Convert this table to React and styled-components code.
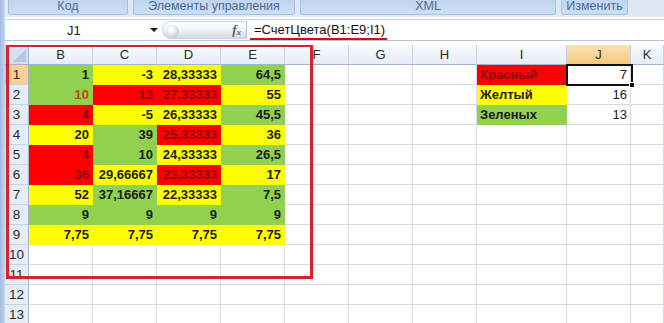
import React from 'react';
import styled, { createGlobalStyle, css } from 'styled-components';

const GlobalStyle = createGlobalStyle`
  html, body {
    margin: 0;
    padding: 0;
    background: #ffffff;
    overflow: hidden;
  }
  * {
    box-sizing: border-box;
  }
`;

const FILLS = {
  g: '#92d050',
  y: '#ffff00',
  r: '#ff0000',
};

// value, fill, optional text colour
const data = [
  [['1', 'g'], ['-3', 'y'], ['28,33333', 'y'], ['64,5', 'g']],
  [['10', 'g', '#c2461a'], ['13', 'r'], ['27,33333', 'r'], ['55', 'y']],
  [['4', 'r'], ['-5', 'y'], ['26,33333', 'y'], ['45,5', 'g']],
  [['20', 'y'], ['39', 'g'], ['25,33333', 'r'], ['36', 'y']],
  [['4', 'r'], ['10', 'g'], ['24,33333', 'y'], ['26,5', 'g']],
  [['36', 'r'], ['29,66667', 'y'], ['23,33333', 'r'], ['17', 'y']],
  [['52', 'y'], ['37,16667', 'g'], ['22,33333', 'y'], ['7,5', 'g']],
  [['9', 'g'], ['9', 'g'], ['9', 'g'], ['9', 'g']],
  [['7,75', 'y'], ['7,75', 'y'], ['7,75', 'y'], ['7,75', 'y']],
];

const legend = [
  ['Красный', 'r', '7'],
  ['Желтый', 'y', '16'],
  ['Зеленых', 'g', '13'],
];

const columns = ['B', 'C', 'D', 'E', 'F', 'G', 'H', 'I', 'J', 'K'];

const App = () => {
  const rows = [];
  for (let r = 1; r <= 13; r++) {
    const values = data[r - 1] || [];
    const leg = legend[r - 1];
    rows.push(
      <React.Fragment key={r}>
        <RowHead active={r === 1}>{r}</RowHead>
        {[0, 1, 2, 3].map((c) => {
          const v = values[c];
          return v ? (
            <Cell key={c} fill={FILLS[v[1]]} ink={v[2] || (v[1] === 'r' ? '#8a0a0a' : '#1b1b1b')} bold>
              {v[0]}
            </Cell>
          ) : (
            <Cell key={c} />
          );
        })}
        <Cell />
        <Cell />
        <Cell />
        {leg ? (
          <Cell fill={FILLS[leg[1]]} ink={leg[1] === 'r' ? '#8a0a0a' : '#1b1b1b'} bold left>
            {leg[0]}
          </Cell>
        ) : (
          <Cell />
        )}
        <Cell ink='#1b1b1b'>{leg ? leg[2] : ''}</Cell>
        <Cell />
      </React.Fragment>
    );
  }

  return (
    <Window>
      <GlobalStyle />
      <Frame />
      <Main>
        <Ribbon>
          <RibbonTab width={120}>Код</RibbonTab>
          <RibbonTab width={162}>Элементы управления</RibbonTab>
          <RibbonTab width={256}>XML</RibbonTab>
          <RibbonTab width={67}>Изменить</RibbonTab>
        </Ribbon>

        <FormulaBar>
          <NameBox>
            <span>J1</span>
            <DropArrow />
          </NameBox>
          <Grip>
            <GripKnob />
            <Fx>
              f<sub>x</sub>
            </Fx>
          </Grip>
          <Formula>
            <Underlined>=СчетЦвета(B1:E9;I1)</Underlined>
          </Formula>
        </FormulaBar>

        <SheetWrap>
          <Sheet>
            <Corner />
            {columns.map((c) => (
              <ColHead key={c} active={c === 'J'}>
                {c}
              </ColHead>
            ))}
            {rows}
          </Sheet>
          <Highlight />
          <Selection>
            <Handle />
          </Selection>
        </SheetWrap>
      </Main>
    </Window>
  );
};

const Window = styled.div`
  display: flex;
  width: 664px;
  height: 323px;
  background: #ffffff;
  font-family: 'Liberation Sans', Arial, sans-serif;
`;

const Frame = styled.div`
  width: 5px;
  flex-shrink: 0;
  background: linear-gradient(to right, #9fbbe0, #c4d7ef);
`;

const Main = styled.div`
  flex: 1;
  display: flex;
  flex-direction: column;
  min-width: 0;
`;

const Ribbon = styled.div`
  display: flex;
  gap: 5px;
  height: 17px;
  padding: 0 0 0 3px;
  background: #dfe9f6;
`;

const RibbonTab = styled.div`
  width: ${(p) => p.width}px;
  height: 15px;
  display: flex;
  align-items: center;
  justify-content: center;
  font-size: 12.5px;
  color: #4d6b94;
  background: linear-gradient(to bottom, #c0d5ef, #cddff4);
  border: 1px solid #a9c1e0;
  border-top: none;
  border-radius: 0 0 3px 3px;
  line-height: 1;
  padding-bottom: 1px;
`;

const FormulaBar = styled.div`
  display: flex;
  align-items: stretch;
  height: 22px;
  margin-top: 2px;
  background: #ffffff;
  border-top: 1px solid #c3cfdf;
  border-bottom: 1px solid #b9c6d8;
`;

const NameBox = styled.div`
  width: 157px;
  display: flex;
  align-items: center;
  font-size: 13px;
  color: #1b1b1b;
  padding-left: 62px;

  > span {
    flex: 1;
  }
`;

const DropArrow = styled.div`
  width: 0;
  height: 0;
  margin-right: 4px;
  border-left: 4px solid transparent;
  border-right: 4px solid transparent;
  border-top: 4px solid #1b1b1b;
`;

const Grip = styled.div`
  position: relative;
  width: 85px;
  margin: 1px 0;
  display: flex;
  align-items: center;
  justify-content: flex-end;
  padding-right: 5px;
  border-radius: 10px 0 0 10px;
  border: 1px solid #c9d2de;
  border-right: 1px solid #b0bccc;
  background: linear-gradient(to bottom, #ffffff 0%, #f2f4f7 45%, #d4dbe4 100%);
`;

const GripKnob = styled.div`
  position: absolute;
  left: 3px;
  top: 3px;
  width: 13px;
  height: 13px;
  border-radius: 50%;
  background: radial-gradient(circle at 40% 35%, #ffffff 15%, #c9ced6 70%, #aeb5c0);
`;

const Fx = styled.span`
  font-family: 'Liberation Serif', 'Times New Roman', serif;
  font-style: italic;
  font-size: 13px;
  color: #5a5a5a;
  font-weight: bold;

  sub {
    font-size: 9px;
    vertical-align: -1px;
  }
`;

const Formula = styled.div`
  flex: 1;
  display: flex;
  align-items: center;
  padding-left: 3px;
  font-size: 13px;
  color: #111111;
`;

const Underlined = styled.span`
  padding-left: 4px;
  padding-right: 2px;
  line-height: 16px;
  border-bottom: 2px solid #d10f0f;
  margin-top: 2px;
`;

const SheetWrap = styled.div`
  position: relative;
  margin-top: 4px;
  flex: 1;
  overflow: hidden;
`;

const Sheet = styled.div`
  display: grid;
  grid-template-columns: 24px repeat(7, 64px) 90px 64px 1fr;
  grid-auto-rows: 20px;
`;

const headBase = css`
  display: flex;
  align-items: center;
  justify-content: center;
  font-size: 13px;
  color: #2a2a2a;
  border-right: 1px solid #c5d2e2;
  border-bottom: 1px solid #9fb4cf;
`;

const Corner = styled.div`
  position: relative;
  background: #d5e0ee;
  border-right: 1px solid #9fb4cf;
  border-bottom: 1px solid #9fb4cf;

  &::after {
    content: '';
    position: absolute;
    right: 2px;
    bottom: 2px;
    border-left: 13px solid transparent;
    border-bottom: 13px solid #b7c9e0;
  }
`;

const ColHead = styled.div`
  ${headBase};
  background: ${(p) =>
    p.active
      ? 'linear-gradient(to bottom, #fbe3b5, #f6c87c)'
      : 'linear-gradient(to bottom, #f7fafe, #e6edf7)'};
`;

const RowHead = styled.div`
  ${headBase};
  font-size: 13.5px;
  border-right: 1px solid #9fb4cf;
  border-bottom: 1px solid #c5d2e2;
  background: ${(p) => (p.active ? '#f9cf95' : '#e6edf7')};
`;

const Cell = styled.div`
  display: flex;
  align-items: center;
  justify-content: ${(p) => (p.left ? 'flex-start' : 'flex-end')};
  padding: 0 3px;
  font-size: 13px;
  font-weight: ${(p) => (p.bold ? 'bold' : 'normal')};
  color: ${(p) => p.ink || '#1b1b1b'};
  background: ${(p) => p.fill || '#ffffff'};
  border-right: 1px solid ${(p) => p.fill || '#d6dce5'};
  border-bottom: 1px solid ${(p) => p.fill || '#d6dce5'};
  white-space: nowrap;
  overflow: hidden;
`;

const Highlight = styled.div`
  position: absolute;
  left: 1px;
  top: -1px;
  width: 307px;
  height: 235px;
  border: 3px solid #d4232a;
  box-shadow: 0 0 1px rgba(180, 20, 20, 0.6);
  pointer-events: none;
`;

const Selection = styled.div`
  position: absolute;
  left: 561px;
  top: 19px;
  width: 67px;
  height: 22px;
  border: 2px solid #111111;
  pointer-events: none;
`;

const Handle = styled.div`
  position: absolute;
  right: -4px;
  bottom: -4px;
  width: 6px;
  height: 6px;
  background: #111111;
  border: 1px solid #ffffff;
`;

export default App;
